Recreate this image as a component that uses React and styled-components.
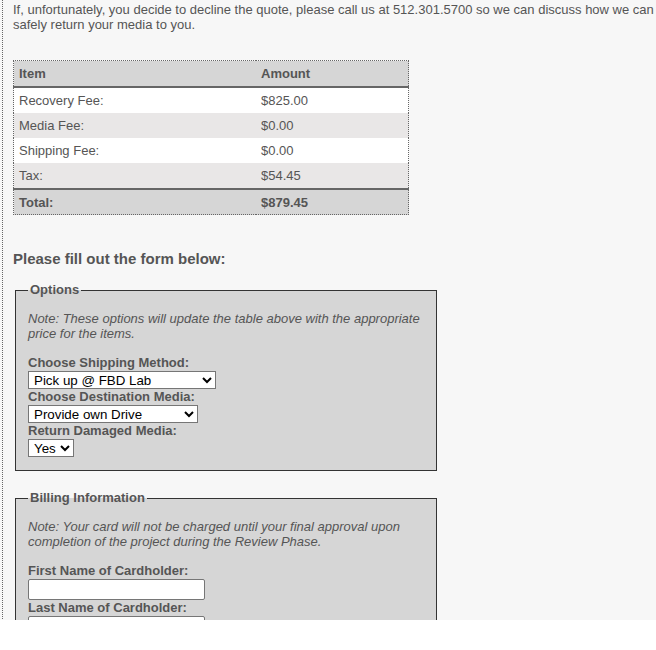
import React from 'react';
import styled, { createGlobalStyle } from 'styled-components';

const GlobalStyle = createGlobalStyle`
  html, body {
    margin: 0;
    padding: 0;
    background: #ffffff;
  }
`;

const rows = [
  { item: 'Recovery Fee:', amount: '$825.00' },
  { item: 'Media Fee:', amount: '$0.00' },
  { item: 'Shipping Fee:', amount: '$0.00' },
  { item: 'Tax:', amount: '$54.45' },
];

function App() {
  return (
    <>
      <GlobalStyle />
      <StPage>
        <StContent>
          <Intro>
            If, unfortunately, you decide to decline the quote, please call us at
            512.301.5700 so we can discuss how we can safely return your media to you.
          </Intro>

          <QuoteTable>
            <thead>
              <tr>
                <HeadCell $first>Item</HeadCell>
                <HeadCell>Amount</HeadCell>
              </tr>
            </thead>
            <tbody>
              {rows.map((r, i) => (
                <Row key={r.item} $alt={i % 2 === 1}>
                  <Cell>{r.item}</Cell>
                  <Cell>{r.amount}</Cell>
                </Row>
              ))}
            </tbody>
            <tfoot>
              <tr>
                <FootCell>Total:</FootCell>
                <FootCell>$879.45</FootCell>
              </tr>
            </tfoot>
          </QuoteTable>

          <FormTitle>Please fill out the form below:</FormTitle>

          <Fieldset>
            <Legend>Options</Legend>
            <Note>
              Note: These options will update the table above with the appropriate
              price for the items.
            </Note>
            <Label>Choose Shipping Method:</Label>
            <Select $w={188} defaultValue="pickup">
              <option value="pickup">Pick up @ FBD Lab</option>
            </Select>
            <Label>Choose Destination Media:</Label>
            <Select $w={170} defaultValue="own">
              <option value="own">Provide own Drive</option>
            </Select>
            <Label>Return Damaged Media:</Label>
            <Select $w={46} defaultValue="yes">
              <option value="yes">Yes</option>
              <option value="no">No</option>
            </Select>
          </Fieldset>

          <Fieldset>
            <Legend>Billing Information</Legend>
            <Note>
              Note: Your card will not be charged until your final approval upon
              completion of the project during the Review Phase.
            </Note>
            <Label>First Name of Cardholder:</Label>
            <TextInput type="text" />
            <Label>Last Name of Cardholder:</Label>
            <TextInput type="text" />
          </Fieldset>
        </StContent>
      </StPage>
    </>
  );
}

// page frame
const StPage = styled.div`
  height: 620px;
  overflow: hidden;
  background: #f7f7f7;
  padding-left: 2px;
  font-family: 'Liberation Sans', Arial, sans-serif;
  color: #555555;
`;

const StContent = styled.div`
  border-left: 1px dotted #666666;
  min-height: 100%;
  padding: 2px 0 0 10px;
`;

const Intro = styled.p`
  margin: 0 0 28px 0;
  font-size: 13px;
  line-height: 15px;
`;

// quote table
const QuoteTable = styled.table`
  width: 396px;
  border-collapse: collapse;
  border: 1px dotted #666666;
  font-size: 13px;
  margin-bottom: 35px;
`;

const HeadCell = styled.th`
  width: ${(p) => (p.$first ? '232px' : 'auto')};
  height: 25px;
  padding: 0 5px;
  text-align: left;
  font-weight: bold;
  background: #d6d6d6;
  border-bottom: 2px solid #666666;
`;

const Row = styled.tr`
  background: ${(p) => (p.$alt ? '#e9e7e7' : '#ffffff')};
`;

const Cell = styled.td`
  height: 25px;
  padding: 0 5px;
`;

const FootCell = styled.td`
  height: 24px;
  padding: 0 5px;
  font-weight: bold;
  background: #d6d6d6;
  border-top: 2px solid #666666;
`;

const FormTitle = styled.h3`
  margin: 0 0 15px 0;
  font-size: 15px;
  line-height: 17px;
  font-weight: bold;
`;

// form blocks
const Fieldset = styled.fieldset`
  width: 396px;
  margin: 0 0 19px 2px;
  padding: 4px 12px 13px 12px;
  background: #d6d6d6;
  border: 1px solid #333333;
  display: flex;
  flex-direction: column;
  align-items: flex-start;
`;

const Legend = styled.legend`
  padding: 0 2px;
  font-size: 13px;
  font-weight: bold;
  line-height: 16px;
`;

const Note = styled.p`
  margin: 9px 0 14px 0;
  font-size: 13px;
  line-height: 15px;
  font-style: italic;
`;

const Label = styled.label`
  font-size: 13px;
  font-weight: bold;
  line-height: 16px;
`;

const Select = styled.select`
  width: ${(p) => p.$w}px;
  height: 18px;
  padding: 0 0 0 1px;
  font-family: 'Liberation Sans', Arial, sans-serif;
  font-size: 13.33px;
  color: #000000;
  background: #ffffff;
  border: 1px solid #767676;
  border-radius: 0;
`;

const TextInput = styled.input`
  width: 171px;
  height: 17px;
  padding: 1px 2px;
  font-family: 'Liberation Sans', Arial, sans-serif;
  font-size: 13.33px;
  background: #ffffff;
  border: 1px solid #767676;
  border-radius: 2px;
`;

export default App;
